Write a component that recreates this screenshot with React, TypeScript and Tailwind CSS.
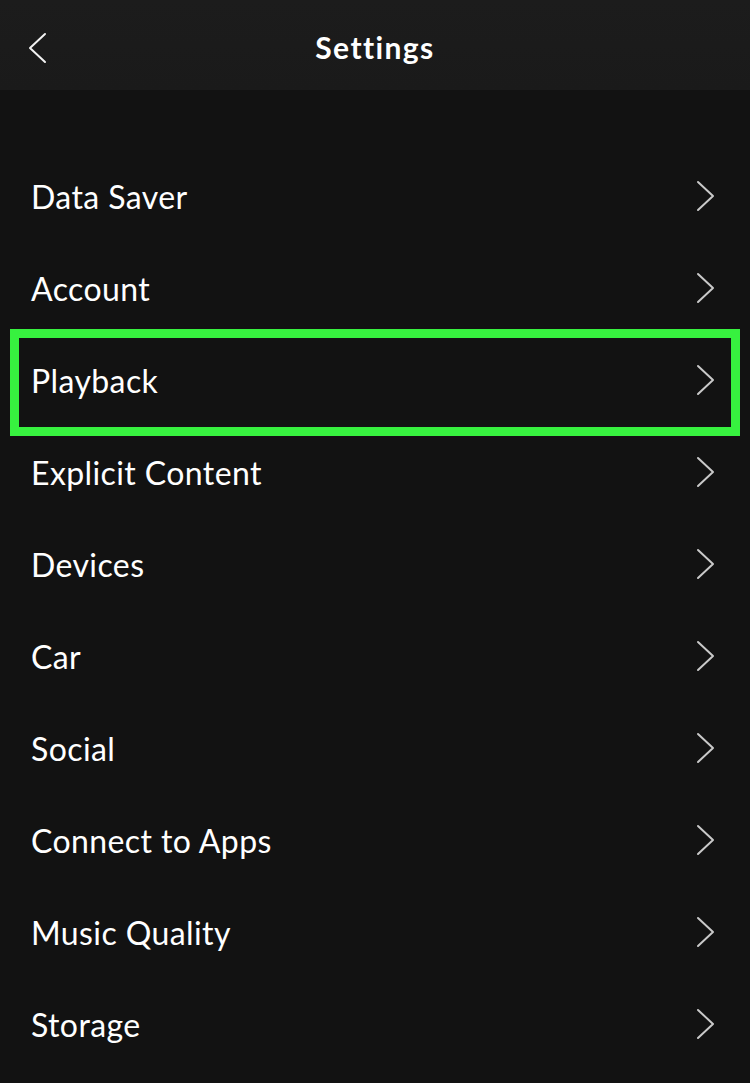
import React from "react";

const items = [
  "Data Saver",
  "Account",
  "Playback",
  "Explicit Content",
  "Devices",
  "Car",
  "Social",
  "Connect to Apps",
  "Music Quality",
  "Storage",
];

function ChevronRight() {
  return (
    <svg width="22" height="32" viewBox="0 0 22 32" fill="none">
      <path d="M3 2 L18 16 L3 30" stroke="#c9c9c9" strokeWidth="2" strokeLinecap="round" strokeLinejoin="round" />
    </svg>
  );
}

function ChevronLeft() {
  return (
    <svg width="22" height="32" viewBox="0 0 22 32" fill="none">
      <path d="M19 2 L4 16 L19 30" stroke="#f2f2f2" strokeWidth="2" strokeLinecap="round" strokeLinejoin="round" />
    </svg>
  );
}

export default function App() {
  return (
    <div
      className="w-[750px] h-[1083px] bg-[#121212] text-white overflow-hidden flex flex-col"
      style={{ fontFamily: "Lato, 'Noto Sans', sans-serif" }}
    >
      <header className="h-[90px] shrink-0 bg-gradient-to-b from-[#1c1c1c] to-[#1a1a1a] relative flex items-center justify-center">
        <div className="absolute left-[26px] top-[32px]">
          <ChevronLeft />
        </div>
        <h1 className="text-[30px] font-bold tracking-[1.4px] leading-none pt-[3px]">Settings</h1>
      </header>
      <div className="pt-[60px] flex flex-col">
        {items.map((label) => (
          <div key={label} className="relative h-[92px] flex items-center justify-between pl-[31px] pr-[33px]">
            <span className="text-[32px] tracking-[0.4px] leading-none pt-[2px]">{label}</span>
            <ChevronRight />
            {label === "Playback" && (
              <div className="absolute left-[10px] right-[10px] top-[-5px] h-[107px] border-[9px] border-[#37f13f] pointer-events-none" />
            )}
          </div>
        ))}
      </div>
    </div>
  );
}
